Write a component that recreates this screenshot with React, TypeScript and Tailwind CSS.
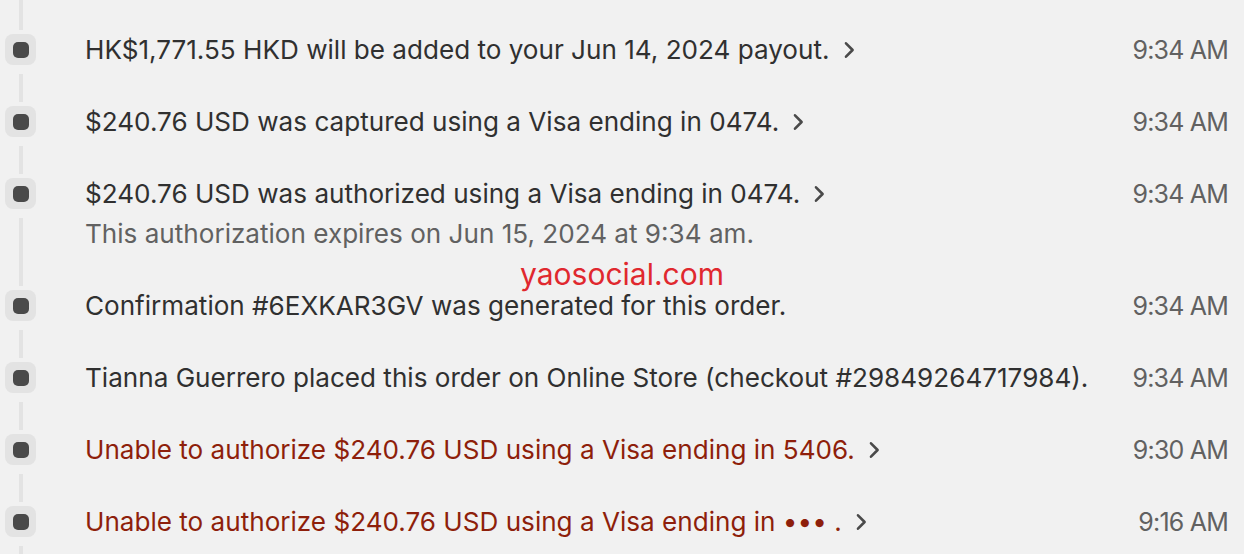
import React from "react";

type Row = {
  text: React.ReactNode;
  sub?: string;
  time: string;
  chevron?: boolean;
  critical?: boolean;
};

const rows: Row[] = [
  { text: "HK$1,771.55 HKD will be added to your Jun 14, 2024 payout.", time: "9:34 AM", chevron: true },
  { text: "$240.76 USD was captured using a Visa ending in 0474.", time: "9:34 AM", chevron: true },
  {
    text: "$240.76 USD was authorized using a Visa ending in 0474.",
    sub: "This authorization expires on Jun 15, 2024 at 9:34 am.",
    time: "9:34 AM",
    chevron: true,
  },
  { text: "Confirmation #6EXKAR3GV was generated for this order.", time: "9:34 AM" },
  { text: "Tianna Guerrero placed this order on Online Store (checkout #29849264717984).", time: "9:34 AM" },
  { text: "Unable to authorize $240.76 USD using a Visa ending in 5406.", time: "9:30 AM", chevron: true, critical: true },
  { text: "Unable to authorize $240.76 USD using a Visa ending in ••• .", time: "9:16 AM", chevron: true, critical: true },
];

function Chevron() {
  return (
    <svg width="13" height="20" viewBox="0 0 13 20" className="ml-[13px] shrink-0" fill="none">
      <path d="M3 3.3 L9.6 10 L3 16.7" stroke="#4a4a4a" strokeWidth="2.6" strokeLinecap="round" strokeLinejoin="round" />
    </svg>
  );
}

export default function App() {
  return (
    <div
      className="relative w-[1244px] h-[554px] overflow-hidden bg-[#f1f1f1] text-[#303030]"
      style={{ fontFamily: "Inter, 'Noto Sans', sans-serif" }}
    >
      <div className="flex flex-col">
        <div className="flex h-[30px] pl-[5px]">
          <div className="flex w-[31px] justify-center">
            <div className="w-[4px] bg-[#e3e3e3]" />
          </div>
        </div>
        {rows.map((r, i) => (
          <div key={i} className="flex pl-[5px] pr-[16px]">
            <div className="flex w-[31px] shrink-0 flex-col items-center">
              <div className="mt-[4px] flex h-[31px] w-[31px] items-center justify-center rounded-[8px] bg-[#e3e3e3]">
                <div className="h-[16px] w-[16px] rounded-[5px] bg-[#4a4a4a]" />
              </div>
              <div className="mt-[9px] w-[4px] flex-1 bg-[#e3e3e3]" />
            </div>
            <div className="ml-[49px] flex flex-1 items-start pb-[32px]">
              <div className="flex flex-1 flex-col">
                <div className="flex h-[40px] items-center">
                  <span
                    className={
                      "text-[26.1px] leading-[40px] " + (r.critical ? "text-[#8e1f0b]" : "text-[#303030]")
                    }
                  >
                    {r.text}
                  </span>
                  {r.chevron && <Chevron />}
                </div>
                {r.sub && <div className="text-[26.1px] leading-[40px] text-[#616161]">{r.sub}</div>}
              </div>
              <div className="text-[25px] leading-[40px] tracking-[-0.8px] text-[#616161]">{r.time}</div>
            </div>
          </div>
        ))}
      </div>
      <div className="absolute left-0 right-0 top-[254px] flex justify-center">
        <span className="text-[30px] leading-[40px] text-[#e0282e]">yaosocial.com</span>
      </div>
    </div>
  );
}
